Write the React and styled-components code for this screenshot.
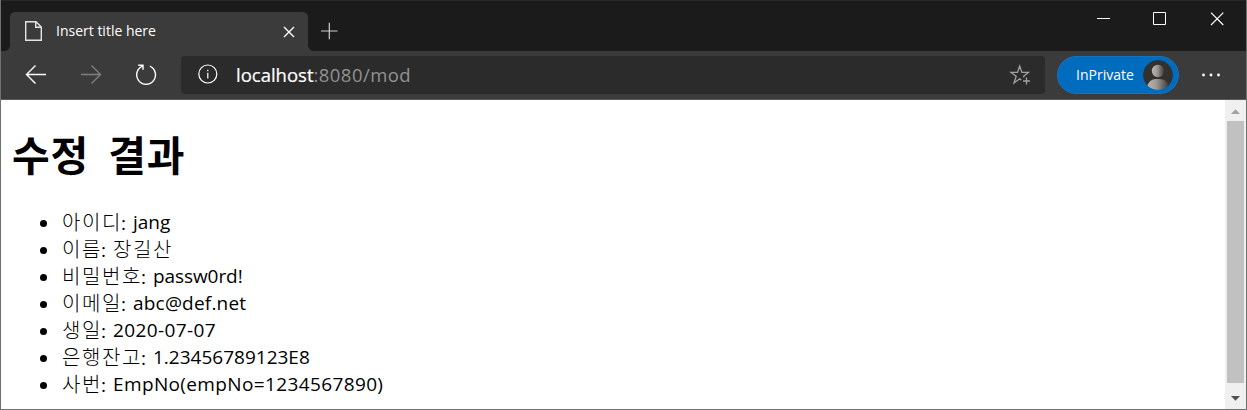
import React from 'react';
import styled, { createGlobalStyle } from 'styled-components';

const colors = {
  frame: '#1b1b1b',
  toolbar: '#3b3b3b',
  field: '#2b2b2b',
  border: '#707070',
  accent: '#006cbe',
};

const GlobalStyle = createGlobalStyle`
  * { box-sizing: border-box; }
  body {
    margin: 0;
    overflow: hidden;
    font-family: "Open Sans", "Noto Sans CJK KR", sans-serif;
  }
`;

const Window = styled.div`
  display: flex;
  flex-direction: column;
  width: 1247px;
  height: 410px;
  background: #fff;
  border: 1px solid ${colors.border};
  border-top: 0;
`;

const TitleBar = styled.header`
  display: flex;
  align-items: flex-end;
  height: 51px;
  padding-left: 9px;
  background: ${colors.frame};
  border-top: 1px solid #272727;
`;

const Tab = styled.div`
  position: relative;
  display: flex;
  align-items: center;
  width: 298px;
  height: 39px;
  padding: 0 12px 0 14px;
  background: ${colors.toolbar};
  border-radius: 5px 5px 0 0;

  &::before,
  &::after {
    content: '';
    position: absolute;
    bottom: 0;
    width: 5px;
    height: 5px;
  }
  &::before {
    left: -5px;
    background: radial-gradient(circle at 0 0, transparent 4.5px, ${colors.toolbar} 5px);
  }
  &::after {
    right: -5px;
    background: radial-gradient(circle at 100% 0, transparent 4.5px, ${colors.toolbar} 5px);
  }
`;

const TabTitle = styled.span`
  flex: 1;
  margin: 0 0 2px 13px;
  color: #fff;
  font-size: 14px;
  line-height: 20px;
  white-space: nowrap;
`;

const Icon = styled.svg`
  display: block;
  flex: none;
  width: ${(p) => p.$w || 20}px;
  height: ${(p) => p.$h || p.$w || 20}px;
  fill: none;
  stroke: ${(p) => p.$color || '#fff'};
  stroke-width: ${(p) => p.$stroke || 1.2};
`;

const NewTab = styled.div`
  margin: 0 0 11px 12px;
`;

const WindowButtons = styled.div`
  display: flex;
  align-self: flex-start;
  gap: 43px;
  margin: 11px 22px 0 auto;
`;

const Toolbar = styled.nav`
  display: flex;
  align-items: center;
  height: 49px;
  padding: 0 24px 1px;
  background: ${colors.toolbar};
  border-bottom: 1px solid #5c5a5c;
`;

const NavButtons = styled.div`
  display: flex;
  gap: 33px;
  width: 156px;
`;

const AddressBar = styled.div`
  display: flex;
  align-items: center;
  width: 864px;
  height: 38px;
  padding: 0 14px 0 16px;
  background: ${colors.field};
  border-radius: 4px;
`;

const Url = styled.span`
  flex: 1;
  margin-left: 18px;
  color: #929292;
  font-size: 18.5px;
  letter-spacing: 0.45px;
  line-height: 26px;
  white-space: nowrap;
`;

const Host = styled.span`
  color: #fff;
  letter-spacing: 0;
  -webkit-text-stroke: 0.2px #fff;
`;

const Profile = styled.div`
  display: flex;
  align-items: center;
  justify-content: space-between;
  width: 122px;
  height: 38px;
  margin: 0 22px 0 12px;
  padding: 0 5px 0 18px;
  border-radius: 19px;
  background: ${colors.accent};
  border: 1px solid #1473be;
  color: #fff;
  font-size: 14px;
`;

const Viewport = styled.div`
  display: flex;
  flex: 1;
  min-height: 0;
`;

const Page = styled.main`
  flex: 1;
  padding: 25px 0 0 11px;
  color: #000;
`;

const Heading = styled.h1`
  margin: 0;
  font: 700 41px/56px "Noto Sans CJK KR", sans-serif;
  letter-spacing: 0.8px;
  word-spacing: 9px;
`;

const List = styled.ul`
  margin: 28px 0 0;
  padding: 0;
  list-style: none;
`;

const Row = styled.li`
  display: flex;
  align-items: center;
  height: 27px;
  padding-left: 28px;
  white-space: nowrap;

  &::before {
    content: '';
    width: 7px;
    height: 7px;
    margin: 2px 15px 0 0;
    border-radius: 50%;
    background: #000;
  }
`;

const Label = styled.span`
  width: ${(p) => p.$chars * 20 + 11}px;
  padding-bottom: 2px;
  font: 300 20px/27px "Noto Sans CJK KR", sans-serif;
  letter-spacing: 1.6px;
`;

const Colon = styled.span`
  margin-left: -1px;
  font: 400 19px/20px "Open Sans", sans-serif;
  letter-spacing: 0;
`;

const Value = styled.span`
  font-size: 19px;
  line-height: 27px;
  letter-spacing: ${(p) => p.$spacing || 0}px;
`;

const KoreanValue = styled(Value)`
  padding-bottom: 2px;
  font: 300 20px/27px "Noto Sans CJK KR", sans-serif;
`;

const ScrollBar = styled.div`
  display: flex;
  flex-direction: column;
  align-items: center;
  width: 21px;
  background: #f0f0f0;
`;

const Thumb = styled.div`
  width: 17px;
  height: 262px;
  background: #c1c1c1;
`;

const Arrow = styled.svg`
  display: block;
  width: 21px;
  height: 21px;
  fill: ${(p) => p.$color};
`;

const fields = [
  { label: '아이디', value: 'jang' },
  { label: '이름', value: '장길산', spacing: 1.6, korean: true },
  { label: '비밀번호', value: 'passw0rd!', spacing: -0.08 },
  { label: '이메일', value: 'abc@def.net', spacing: 0.2 },
  { label: '생일', value: '2020-07-07', spacing: 0.4 },
  { label: '은행잔고', value: '1.23456789123E8' },
  { label: '사번', value: 'EmpNo(empNo=1234567890)', spacing: 0.37 },
];

const Avatar = () => (
  <Icon $w={30} viewBox="0 0 30 30">
    <defs>
      <linearGradient id="person" x1="0" x2="1">
        <stop offset="0" stopColor="#b8b4b1" />
        <stop offset="0.4" stopColor="#a19d9a" />
        <stop offset="1" stopColor="#3b3937" />
      </linearGradient>
      <clipPath id="round"><circle cx="15" cy="15" r="15" /></clipPath>
    </defs>
    <g clipPath="url(#round)" stroke="none">
      <circle cx="15" cy="15" r="15" fill="#323130" />
      <circle cx="15" cy="11" r="6.2" fill="url(#person)" />
      <path d="M4 30V27Q6 19 13 19H17Q24 19 26 27V30Z" fill="url(#person)" />
    </g>
  </Icon>
);

const App = () => (
  <>
    <GlobalStyle />
    <Window>
      <TitleBar>
        <Tab>
          <Icon $w={19} $h={22} viewBox="0 0 19 22" $color="#e4e4e4" $stroke={1.4}>
            <path d="M1.7 .7H12L17.3 6V19.3H1.7ZM11.7 .7V6.3H17.3" />
          </Icon>
          <TabTitle>Insert title here</TabTitle>
          <Icon $w={14} viewBox="0 0 14 14" $stroke={1.4}>
            <path d="M2 2L12 12M12 2L2 12" />
          </Icon>
        </Tab>
        <NewTab>
          <Icon $w={18} viewBox="0 0 18 18" $color="#d0d0d0">
            <path d="M1 9H17.5M9.3 .7V17.3" />
          </Icon>
        </NewTab>
        <WindowButtons>
          <Icon $w={14} viewBox="0 0 14 14" $stroke={1}><path d="M1 6.5H14" /></Icon>
          <Icon $w={14} viewBox="0 0 14 14" $stroke={1}><path d="M.5 .5H12.5V12.5H.5Z" /></Icon>
          <Icon $w={14} viewBox="0 0 14 14"><path d="M1 .7L13.3 13M13.3 .7L1 13" /></Icon>
        </WindowButtons>
      </TitleBar>
      <Toolbar>
        <NavButtons>
          <Icon $w={22} viewBox="0 0 22 22" $stroke={1.4}>
            <path d="M21 10.5H1.7M10.5 1.5L1.5 10.5L10.5 19.5" />
          </Icon>
          <Icon $w={22} viewBox="0 0 22 22" $color="#808080" $stroke={1.3}>
            <path d="M1 10.5H20.5M11.5 1.5L20.5 10.5L11.5 19.5" />
          </Icon>
          <Icon $w={22} viewBox="0 0 22 22" $stroke={1.4}>
            <path d="M7.4 2.2A9.4 9.4 0 1 0 14.8 2.2M3.2 1.3H8V5.8" />
          </Icon>
        </NavButtons>
        <AddressBar>
          <Icon $w={21} viewBox="0 0 21 21">
            <circle cx="10.8" cy="10" r="9" />
            <path d="M10.8 8.8V14.5M10.8 5.7V7.2" />
          </Icon>
          <Url><Host>localhost</Host>:8080/mod</Url>
          <Icon $w={22} viewBox="0 0 22 22" $color="#a0a0a0" $stroke={1.3}>
            <path d="M12.3 15.9L10.7 14.7L5 19L7.2 12.2L2 8.4H8.5L10.7 2L12.9 8.4H19.4L14.6 12.2L15 13.4M17.5 13.5V20.5M14 17H21" />
          </Icon>
        </AddressBar>
        <Profile>
          InPrivate
          <Avatar />
        </Profile>
        <Icon $w={20} viewBox="0 0 20 20" $color="none">
          <g fill="#fff">
            <circle cx="2.5" cy="10" r="1.4" />
            <circle cx="10" cy="10" r="1.4" />
            <circle cx="17.5" cy="10" r="1.4" />
          </g>
        </Icon>
      </Toolbar>
      <Viewport>
        <Page>
          <Heading>수정 결과</Heading>
          <List>
            {fields.map((f) => {
              const Text = f.korean ? KoreanValue : Value;
              return (
                <Row key={f.label}>
                  <Label $chars={f.label.length}>{f.label}<Colon>:</Colon></Label>
                  <Text $spacing={f.spacing}>{f.value}</Text>
                </Row>
              );
            })}
          </List>
        </Page>
        <ScrollBar>
          <Arrow viewBox="0 0 21 21" $color="#a3a3a3"><path d="M6 14H15L10.5 9.2Z" /></Arrow>
          <Thumb />
          <Arrow viewBox="0 0 21 21" $color="#505050"><path d="M6 13H15L10.5 17.8Z" /></Arrow>
        </ScrollBar>
      </Viewport>
    </Window>
  </>
);

export default App;
